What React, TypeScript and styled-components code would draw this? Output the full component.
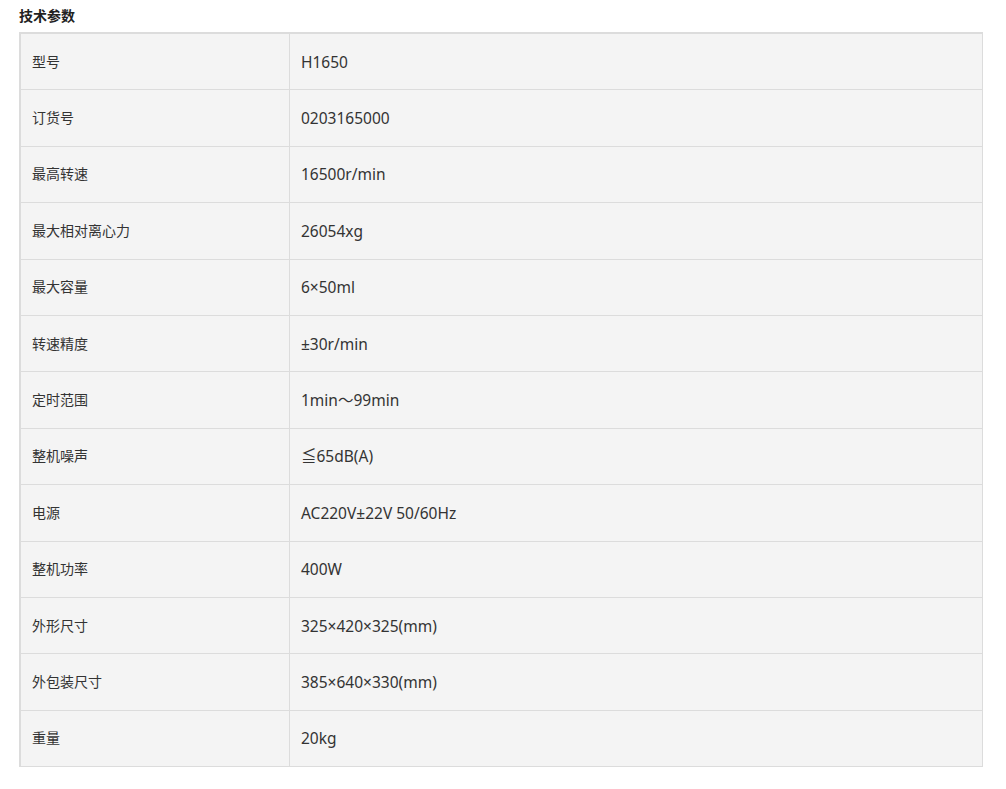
import React from "react";
import styled, { createGlobalStyle } from "styled-components";

const Global = createGlobalStyle`
  html, body { margin: 0; padding: 0; background: #fff; }
  body { font-family: "Noto Sans", "Noto Sans CJK SC", sans-serif; color: #333; }
`;

const Page = styled.div`
  padding: 5px 23px 0 19px;
`;

const Title = styled.h3`
  margin: 0 0 6px 0;
  font-size: 14px;
  line-height: 21px;
  font-weight: 700;
  color: #222;
  font-family: "Noto Sans CJK SC", "Noto Sans", sans-serif;
`;

const Table = styled.table`
  width: 964px;
  border-collapse: separate;
  border-spacing: 0;
  border-top: 2px solid #dcdcdc;
  border-left: 2px solid #dcdcdc;
  background: #f4f4f4;
  table-layout: fixed;
`;

const Row = styled.tr`
  height: 56.4px;
`;

const Cell = styled.td<{ $first?: boolean }>`
  box-sizing: border-box;
  width: ${(p) => (p.$first ? "269px" : "auto")};
  padding: 0 0 0 11px;
  border-right: 1px solid #dcdcdc;
  border-bottom: 1px solid #dcdcdc;
  font-size: ${(p) => (p.$first ? "14px" : "15.5px")};
  line-height: 20px;
  color: #333;
  vertical-align: middle;
  font-family: "Noto Sans", "Noto Sans CJK SC", sans-serif;
`;

const rows: [string, string][] = [
  ["型号", "H1650"],
  ["订货号", "0203165000"],
  ["最高转速", "16500r/min"],
  ["最大相对离心力", "26054xg"],
  ["最大容量", "6×50ml"],
  ["转速精度", "±30r/min"],
  ["定时范围", "1min～99min"],
  ["整机噪声", "≦65dB(A)"],
  ["电源", "AC220V±22V 50/60Hz"],
  ["整机功率", "400W"],
  ["外形尺寸", "325×420×325(mm)"],
  ["外包装尺寸", "385×640×330(mm)"],
  ["重量", "20kg"],
];

export default function App() {
  return (
    <>
      <Global />
      <Page>
        <Title>技术参数</Title>
        <Table>
          <tbody>
            {rows.map(([k, v]) => (
              <Row key={k}>
                <Cell $first>{k}</Cell>
                <Cell>{v}</Cell>
              </Row>
            ))}
          </tbody>
        </Table>
      </Page>
    </>
  );
}
